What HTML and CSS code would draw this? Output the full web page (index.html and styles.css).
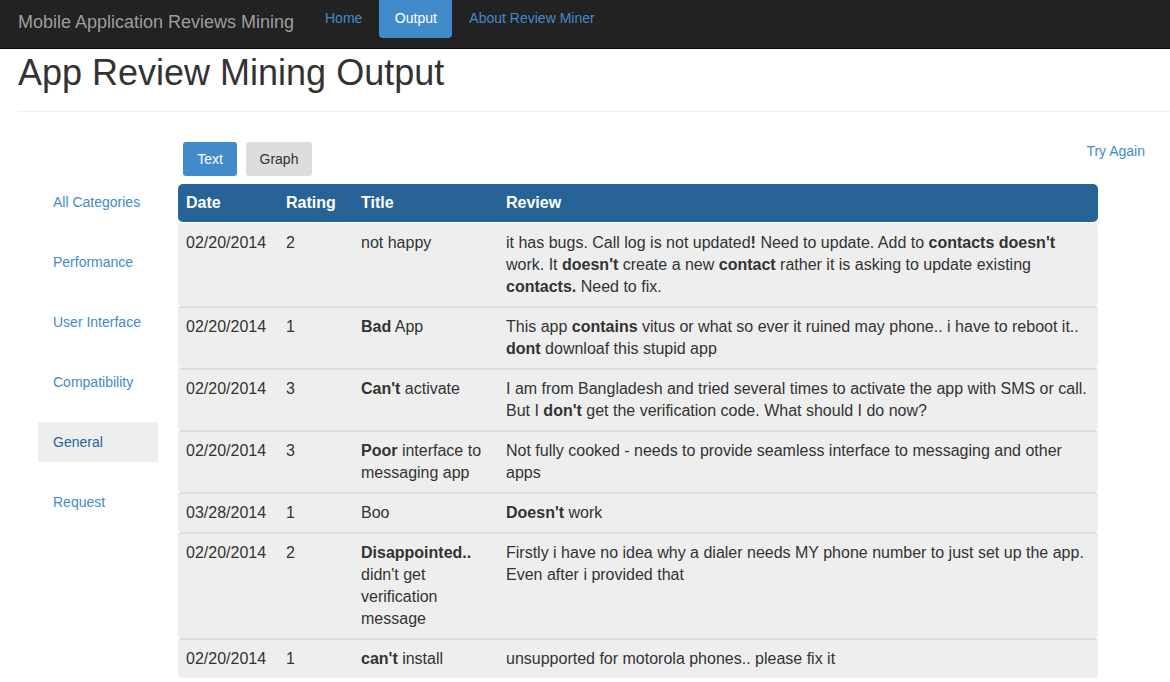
FILE: index.html
```html
<!DOCTYPE html>
<html>
<head>
<meta charset="utf-8">
<link rel="stylesheet" href="styles.css">
</head>
<body>
<nav class="navbar">
  <span class="brand">Mobile Application Reviews Mining</span>
  <ul class="nav">
    <li><a class="nav-link home">Home</a></li>
    <li><a class="nav-link active">Output</a></li>
    <li><a class="nav-link about">About Review Miner</a></li>
  </ul>
</nav>
<div class="page">
  <h1 class="title">App Review Mining Output</h1>
  <hr class="rule">
</div>
<div class="layout">
  <ul class="sidebar">
    <li><a class="side-link">All Categories</a></li>
    <li><a class="side-link">Performance</a></li>
    <li><a class="side-link">User Interface</a></li>
    <li><a class="side-link">Compatibility</a></li>
    <li><a class="side-link current">General</a></li>
    <li><a class="side-link">Request</a></li>
  </ul>
  <div class="main">
    <div class="toolbar">
      <button class="btn btn-primary">Text</button>
      <button class="btn btn-default">Graph</button>
    </div>
    <div class="table">
      <div class="row head">
        <div>Date</div><div>Rating</div><div>Title</div><div>Review</div>
      </div>
      <div class="row">
        <div>02/20/2014</div><div>2</div><div>not happy</div>
        <div>it has bugs. Call log is not updated<b>!</b> Need to update. Add to <b>contacts doesn't</b> work. It <b>doesn't</b> create a new <b>contact</b> rather it is asking to update existing <b>contacts.</b> Need to fix.</div>
      </div>
      <div class="row">
        <div>02/20/2014</div><div>1</div><div><b>Bad</b> App</div>
        <div>This app <b>contains</b> vitus or what so ever it ruined may phone.. i have to reboot it.. <b>dont</b> downloaf this stupid app</div>
      </div>
      <div class="row">
        <div>02/20/2014</div><div>3</div><div><b>Can't</b> activate</div>
        <div>I am from Bangladesh and tried several times to activate the app with SMS or call. But I <b>don't</b> get the verification code. What should I do now?</div>
      </div>
      <div class="row">
        <div>02/20/2014</div><div>3</div><div><b>Poor</b> interface to messaging app</div>
        <div>Not fully cooked - needs to provide seamless interface to messaging and other apps</div>
      </div>
      <div class="row">
        <div>03/28/2014</div><div>1</div><div>Boo</div>
        <div><b>Doesn't</b> work</div>
      </div>
      <div class="row">
        <div>02/20/2014</div><div>2</div><div><b>Disappointed..</b> didn't get verification message</div>
        <div>Firstly i have no idea why a dialer needs MY phone number to just set up the app. Even after i provided that</div>
      </div>
      <div class="row last">
        <div>02/20/2014</div><div>1</div><div><b>can't</b> install</div>
        <div>unsupported for motorola phones.. please fix it</div>
      </div>
    </div>
  </div>
  <div class="aside">
    <a class="try">Try Again</a>
  </div>
</div>
</body>
</html>
```
FILE: styles.css
```css
* { box-sizing: border-box; }
html, body { margin: 0; padding: 0; }
body {
  font-family: "Liberation Sans", Arial, sans-serif;
  font-size: 14px;
  color: #333;
  background: #fff;
  width: 1170px;
  overflow: hidden;
}
b { font-weight: bold; }
.navbar {
  height: 49px;
  background: #222;
  border-bottom: 1px solid #080808;
  display: flex;
  align-items: flex-start;
}
.brand {
  color: #9d9d9d;
  font-size: 18px;
  line-height: 20px;
  padding: 12px 0 0 18px;
  width: 307px;
}
.nav {
  list-style: none;
  margin: 0;
  padding: 0;
  display: flex;
}
.nav-link {
  display: block;
  color: #428bca;
  font-size: 14px;
  line-height: 20px;
  padding: 8px 0 10px 0;
  height: 38px;
}
.nav-link.home { padding-left: 18px; padding-right: 17px; }
.nav-link.active {
  background: #428bca;
  color: #fff;
  border-radius: 0 0 4px 4px;
  width: 73px;
  text-align: center;
}
.nav-link.about { padding-left: 17px; }
.page { padding-left: 18px; }
.title {
  margin: 0;
  font-size: 36px;
  font-weight: normal;
  line-height: 46px;
  padding-top: 1px;
  color: #333;
}
.rule {
  border: 0;
  border-top: 1px solid #eee;
  margin: 15px 0 0 0;
}
.layout {
  display: flex;
  padding-left: 38px;
}
.sidebar {
  list-style: none;
  margin: 70px 20px 0 0;
  padding: 0;
  width: 120px;
  display: flex;
  flex-direction: column;
  gap: 20px;
}
.side-link {
  display: block;
  height: 40px;
  line-height: 40px;
  padding-left: 15px;
  color: #428bca;
  font-size: 14px;
}
.side-link.current {
  background: #eee;
  color: #2a6496;
}
.main { width: 920px; flex: none; }
.toolbar {
  display: flex;
  gap: 9px;
  padding: 30px 0 0 5px;
  height: 72px;
}
.btn {
  font-family: "Liberation Sans", Arial, sans-serif;
  font-size: 14px;
  height: 34px;
  border: 0;
  border-radius: 3px;
  padding: 0;
  line-height: 34px;
}
.btn-primary { background: #428bca; color: #fff; width: 54px; }
.btn-default { background: #ddd; color: #333; width: 66px; }
.table {
  font-size: 16px;
  line-height: 22px;
}
.row {
  display: grid;
  grid-template-columns: 100px 75px 145px 600px;
  background: #eee;
  border-top: 2px solid #ddd;
  border-radius: 4px;
}
.row > div { padding: 8px; }
.row.head {
  background: #286397;
  color: #fff;
  font-weight: bold;
  border-top: 0;
  border-radius: 5px;
  height: 38px;
  margin-bottom: 1px;
}
.row.head + .row { border-top: 0; padding-top: 1px; }
.aside {
  flex: none;
  width: 72px;
  display: flex;
  justify-content: flex-end;
  padding: 29px 25px 0 0;
}
.try {
  color: #428bca;
  font-size: 14px;
  line-height: 20px;
  white-space: nowrap;
}
```
